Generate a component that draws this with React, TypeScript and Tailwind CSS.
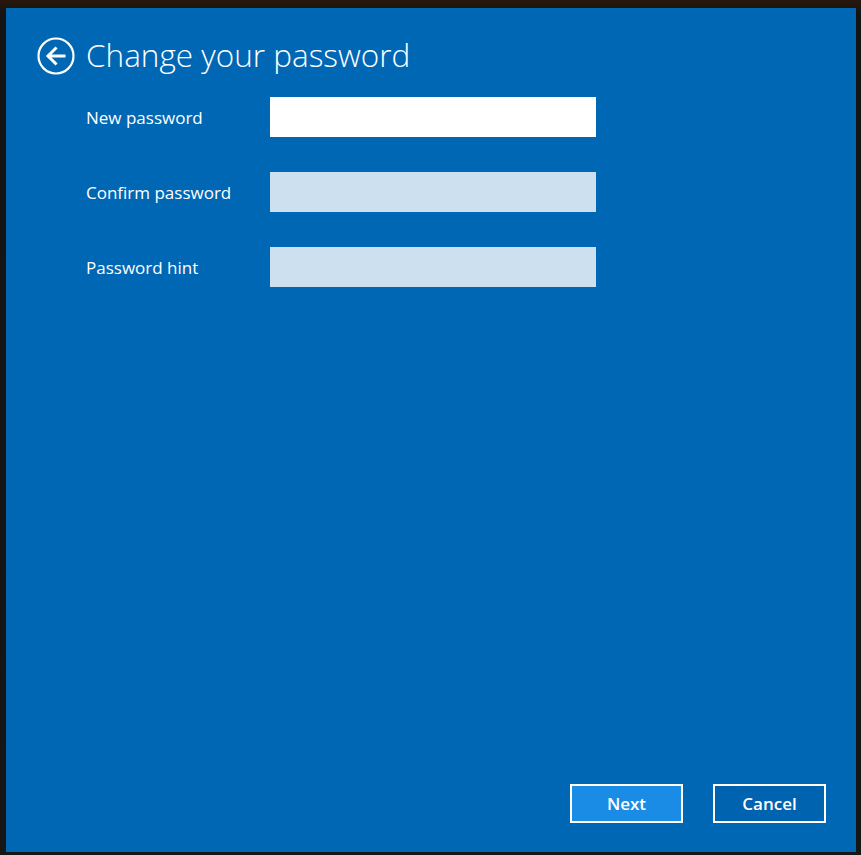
import React from "react";

// ── Back arrow in a circle ─────────────────────────────────────────────────
function BackIcon() {
  return (
    <svg width="38" height="38" viewBox="0 0 38 38" fill="none">
      <circle cx="19" cy="19" r="17.5" stroke="white" strokeWidth="2.2" />
      <path
        d="M27 19H11.5M18.5 11.5L11 19l7.5 7.5"
        stroke="white"
        strokeWidth="3"
        strokeLinecap="square"
      />
    </svg>
  );
}

// ── Label + field row ──────────────────────────────────────────────────────
function FieldRow({ label, active }: { label: string; active?: boolean }) {
  return (
    <div className="flex items-center h-[40px]">
      <span className="w-[184px] text-[17px] text-white leading-none mt-[1px]">
        {label}
      </span>
      <div
        className={
          active
            ? "w-[326px] h-[40px] bg-white"
            : "w-[326px] h-[40px] bg-[#cce0f0]"
        }
      />
    </div>
  );
}

// ── Main page ──────────────────────────────────────────────────────────────
export default function App() {
  return (
    <div
      className="w-[861px] h-[855px] pt-[8px] pl-[6px] pr-[5px] pb-[3px] bg-[linear-gradient(180deg,#2a160c_0px,#141414_14px,#161616_100%)]"
      style={{ fontFamily: '"Open Sans", "Noto Sans", sans-serif' }}
    >
      <div className="w-full h-full bg-[#0067b5] flex flex-col">
        {/* Header */}
        <div className="flex items-center pl-[31px] pt-[29px] gap-[11px]">
          <BackIcon />
          <h1 className="text-[31.5px] font-light text-white leading-none -mt-[2px]">
            Change your password
          </h1>
        </div>

        {/* Form */}
        <div className="flex flex-col gap-[35px] pl-[80px] mt-[22px]">
          <FieldRow label="New password" active />
          <FieldRow label="Confirm password" />
          <FieldRow label="Password hint" />
        </div>

        {/* Footer buttons */}
        <div className="mt-auto flex justify-end gap-[30px] pr-[30px] pb-[29px]">
          <button className="w-[113px] h-[39px] border-2 border-white bg-[#1a8ce6] text-white text-[17px] font-semibold">
            Next
          </button>
          <button className="w-[113px] h-[39px] border-2 border-white bg-[#0063b0] text-white text-[17px] font-semibold">
            Cancel
          </button>
        </div>
      </div>
    </div>
  );
}
